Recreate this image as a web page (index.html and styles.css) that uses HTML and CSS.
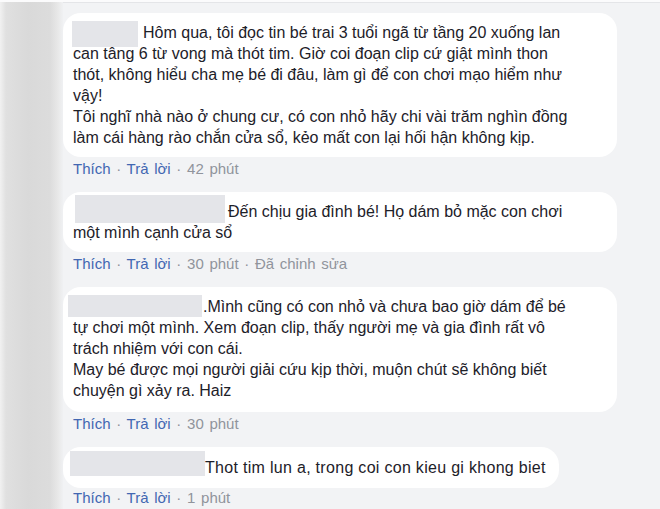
FILE: index.html
```html
<!DOCTYPE html>
<html lang="vi">
<head>
    <meta charset="UTF-8">
    <meta name="viewport" content="width=device-width, initial-scale=1.0">
    <title>Bình luận</title>
    <link rel="stylesheet" href="styles.css">
</head>
<body>
    <div class="page">
        <div class="avatars"></div>

        <ul class="comments">
            <li class="comment c1">
                <div class="bubble long">
                    <span class="mask"></span>Hôm qua, tôi đọc tin bé trai 3 tuổi ngã từ tầng 20 xuống lan<br>
                    can tâng 6 từ vong mà thót tim. Giờ coi đoạn clip cứ giật mình thon<br>
                    thót, không hiểu cha mẹ bé đi đâu, làm gì để con chơi mạo hiểm như<br>
                    vậy!<br>
                    Tôi nghĩ nhà nào ở chung cư, có con nhỏ hãy chi vài trăm nghìn đồng<br>
                    làm cái hàng rào chắn cửa sổ, kẻo mất con lại hối hận không kịp.
                </div>
                <div class="meta"><a href="#">Thích</a> · <a href="#">Trả lời</a> · <span>42 phút</span></div>
            </li>

            <li class="comment c2">
                <div class="bubble long">
                    <span class="mask"></span>Đến chịu gia đình bé! Họ dám bỏ mặc con chơi<br>
                    một mình cạnh cửa sổ
                </div>
                <div class="meta"><a href="#">Thích</a> · <a href="#">Trả lời</a> · <span>30 phút</span> · <span>Đã chỉnh sửa</span></div>
            </li>

            <li class="comment c3">
                <div class="bubble long">
                    <span class="mask"></span>.Mình cũng có con nhỏ và chưa bao giờ dám để bé<br>
                    tự chơi một mình. Xem đoạn clip, thấy người mẹ và gia đình rất vô<br>
                    trách nhiệm với con cái.<br>
                    May bé được mọi người giải cứu kịp thời, muộn chút sẽ không biết<br>
                    chuyện gì xảy ra. Haiz
                </div>
                <div class="meta"><a href="#">Thích</a> · <a href="#">Trả lời</a> · <span>30 phút</span></div>
            </li>

            <li class="comment c4">
                <div class="bubble">
                    <span class="mask"></span>Thot tim lun a, trong coi con kieu gi khong biet
                </div>
                <div class="meta"><a href="#">Thích</a> · <a href="#">Trả lời</a> · <span>1 phút</span></div>
            </li>
        </ul>
    </div>
</body>
</html>
```

FILE: styles.css
```css
body {
    margin: 0;
    background: #f2f3f5;
    font-family: Arial, "Liberation Sans", sans-serif;
    color: #1d2129;
}
.page {
    display: flex;
    min-height: 509px;
    border-top: 2px solid #fbfbfc;
    box-shadow: inset 0 1px 0 #e4e5e8;
}
.avatars {
    width: 63px;
    flex-shrink: 0;
    background: linear-gradient(to right, #f1f1f1 0, #e0e0e0 6px, #d9d9d9 28px, #dcdcdc 50px, #e8e8e8 58px, #f0f1f3 63px);
}
.comments {
    list-style: none;
    margin: 0;
    padding: 11px 0 0;
    flex: 1;
}
.comment {
    margin-bottom: 14px;
}
.bubble {
    display: inline-block;
    background: #fff;
    border-radius: 18px;
    padding: 9px 10px;
    font-size: 16px;
    line-height: 21px;
    white-space: nowrap;
}
.bubble.long {
    display: block;
    width: 534px;
}
.c3 .bubble {
    padding-bottom: 11px;
}
.c4 .bubble {
    padding: 10px 13px 10px 10px;
    letter-spacing: 0.3px;
}
.c4 .meta {
    margin-top: 1px;
}
.mask {
    display: inline-block;
    background: #e4e5e9;
}
.c1 .mask {
    width: 66px;
    height: 26px;
    margin: -2px 5px -9px -1px;
}
.c2 .mask {
    width: 150px;
    height: 28px;
    margin: -6px 3px -6px 2px;
}
.c3 .mask {
    width: 134px;
    height: 22px;
    margin: -1px 1px -5px -5px;
}
.c4 .mask {
    width: 135px;
    height: 25px;
    margin: -6px 0 -3px -3px;
}
.meta {
    margin-top: 3px;
    padding-left: 10px;
    font-size: 15px;
    line-height: 18px;
    word-spacing: 1.5px;
    color: #90949c;
}
.meta a {
    color: #4267b2;
    text-decoration: none;
}
```
